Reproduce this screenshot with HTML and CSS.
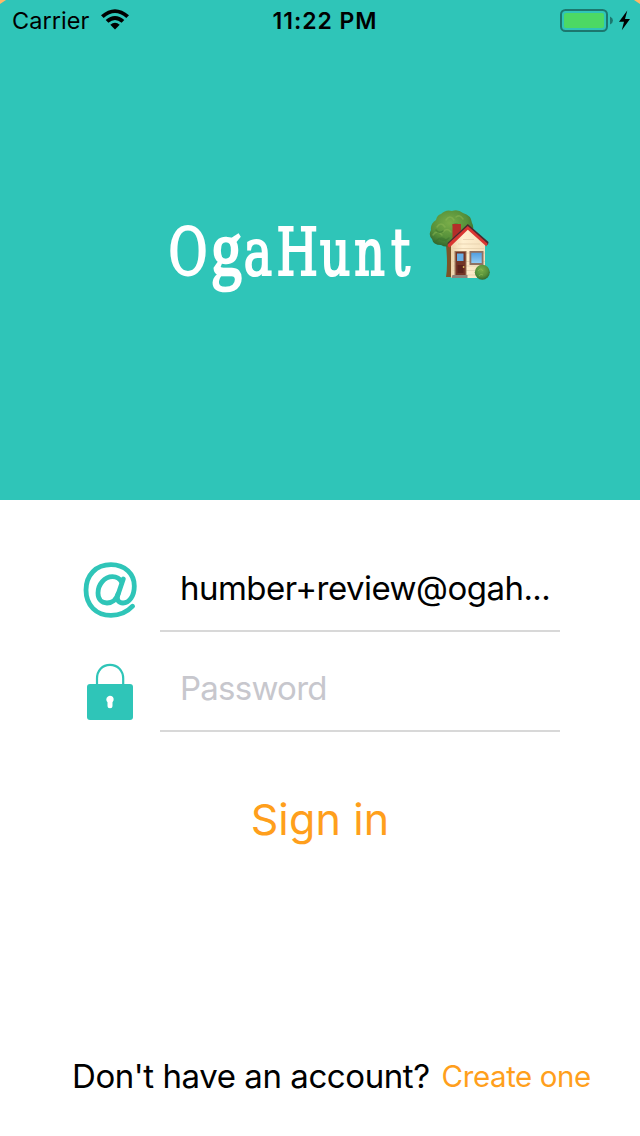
FILE: index.html
```html
<!DOCTYPE html>
<html lang="en">
<head>
<meta charset="utf-8">
<title>OgaHunt</title>
<link rel="stylesheet" href="styles.css">
</head>
<body>
<main class="screen">
  <header class="hero">
    <div class="status">
      <div class="status-left">
        <span class="carrier">Carrier</span>
        <svg class="wifi" width="30" height="22" viewBox="0 0 30 22">
          <path d="M1 6.3Q15-5.7 29 6.3L26.3 9Q15-.8 3.7 9Z"/>
          <path d="M5.7 11.1Q15 3 24.3 11.1L21.6 13.8Q15 8.2 8.4 13.8Z"/>
          <path d="M10.3 15.7Q15 11.8 19.7 15.7L15 20.4Z"/>
        </svg>
      </div>
      <span class="time">11:22 PM</span>
      <svg class="battery" width="74" height="26" viewBox="0 0 74 26">
        <rect x="1" y="3" width="46" height="21" rx="4.5" fill="none" stroke="#1c776e" stroke-width="2"/>
        <rect x="4" y="6" width="40" height="15" rx="2" fill="#4cd964"/>
        <path d="M50 9.5Q53 11 53 13.5T50 17.5Z" fill="#1c776e"/>
        <path d="M67.3 3.5L59 14.7H64L61.8 23.2L70 12H65Z"/>
      </svg>
    </div>
    <div class="brand">
      <svg class="wordmark" width="250" height="90" viewBox="0 0 250 90">
        <text class="wordmark-text" transform="scale(.8 1)" x="2 55 96 137 191 234 280" y="70">O<tspan class="wordmark-g">g</tspan>aHunt</text>
      </svg>
      <svg class="house" width="64" height="74" viewBox="0 0 64 74">
        <defs>
          <radialGradient id="leaf" cx=".45" cy=".35" r=".7"><stop offset="0" stop-color="#79ad49"/><stop offset=".6" stop-color="#55903a"/><stop offset="1" stop-color="#2c5f2b"/></radialGradient>
          <linearGradient id="wall" x1="0" x2="1"><stop offset="0" stop-color="#ecd3aa"/><stop offset=".35" stop-color="#fff0d0"/><stop offset="1" stop-color="#f5dfbb"/></linearGradient>
          <linearGradient id="glass" x1="0" y1="0" x2="0" y2="1"><stop offset="0" stop-color="#519fe0"/><stop offset="1" stop-color="#92cbf2"/></linearGradient>
        </defs>
        <path d="M17 36H25V68H17Q19 56 17 36Z" fill="#7c5528"/>
        <path d="M12 5Q17 0 23 2Q29 0 34 4Q42 6 43 14Q46 19 42 26L22 36Q17 39 12 36Q4 36 3 30Q-1 26 2 21Q1 15 7 11Q8 6 12 5Z" fill="url(#leaf)"/>
        <g fill="none" stroke-width="1.5" stroke-linecap="round" opacity=".45">
          <path d="M8 18q4-6 8 0M17 11q4-6 8 0M27 8q4-3 7 2M4 26q4-6 9 0M14 23q4-5 8 0" stroke="#91bc58"/>
          <path d="M7 32q6-6 10 0M11 30q5 3 9-1M24 16q5-3 7 3M7 21q3 4 7 1" stroke="#356d2d"/>
        </g>
        <path d="M22 35L39 19L56 35V69H22Z" fill="url(#wall)"/>
        <path d="M24 39.5H55M24 44H56M24 52.5H56M24 57H56M24 61.5H56M24 66H56M29 35H51M34 30.5H45" stroke="#e2cda9" stroke-width=".7"/>
        <path d="M23.5 15H32V25L23.5 32Z" fill="#b52d29"/>
        <path d="M18.5 34L38.8 15L59.5 33L59 36L38.8 19L19.5 37Z" fill="#492b30"/>
        <path d="M19 35L38.8 17L58.5 34.5L57.5 37.5L38.8 20.8L20.5 38.5L18.5 37Z" fill="#d93632"/>
        <path d="M25.5 42H37.5V67H25.5Z" fill="#9c7659"/>
        <path d="M26.8 43H36.5V66.5H26.8Z" fill="#733526"/>
        <path d="M28 44.5H34.5V52H28Z" fill="#68afe4"/>
        <path d="M28.5 56H34.5V64H28.5Z" fill="#5b241c"/>
        <circle cx="34.6" cy="58" r=".9" fill="#d9b85c"/>
        <path d="M23.5 66H38.5V69H22.5Z" fill="#8d8279"/>
        <rect x="40.5" y="42" width="14" height="14" fill="#8f7262"/>
        <rect x="42.3" y="43.8" width="10.4" height="10.2" fill="url(#glass)"/>
        <circle cx="53.3" cy="63.3" r="7.5" fill="url(#leaf)"/>
        <path d="M49 62q3-4 5 0M50 67q2-3 4-1" fill="none" stroke="#8aba53" opacity=".7"/>
      </svg>
    </div>
    <i class="corner corner-left"></i>
    <i class="corner corner-right"></i>
  </header>

  <section class="form">
    <div class="row">
      <svg class="icon" width="60" height="60" viewBox="0 0 60 60" fill="none" stroke="#2fc5b8" stroke-linecap="round" stroke-linejoin="round">
        <path d="M52.6 46.2Q44 55.4 31 55.4C16 55.4 6 45 6 30S16 4.7 31 4.7C45 4.7 54.3 14 54.3 26C54.3 36.5 49 43 43 43C38.5 43 36.5 40 37.7 35.5L43.3 19" stroke-width="4.8"/>
        <path d="M41.5 22C39.5 18.2 36.5 16.7 32.5 16.7C24.5 16.7 18 24.5 18 33C18 39 21.5 43 27 43C32 43 36.5 39.5 38 34" stroke-width="4.8"/>
      </svg>
      <div class="field email">humber+review@ogah...</div>
    </div>
    <div class="row">
      <svg class="icon" width="60" height="60" viewBox="0 0 60 60">
        <path d="M17 26V18.5C17 10.5 22.3 4.8 30 4.8S43.2 10.5 43.2 18.5V26" fill="none" stroke="#2fc5b8" stroke-width="2.2"/>
        <rect x="7" y="24" width="46" height="36" rx="3" fill="#2fc5b8"/>
        <path d="M26.3 39.5A3.7 3.7 0 1 1 32.5 42.2V45.8A2.5 2.5 0 0 1 27.5 45.8V42.2A3.7 3.7 0 0 1 26.3 39.5Z" fill="#fff"/>
      </svg>
      <div class="field password">Password</div>
    </div>
  </section>
  <div class="signin"><span>Sign in</span></div>
  <footer class="signup">
    <span class="question">Don't have an account?</span>
    <span class="create">Create one</span>
  </footer>
</main>
</body>
</html>
```
FILE: styles.css
```css
body { margin: 0; background: #fff; }
.screen {
  width: 640px; height: 1136px; overflow: hidden;
  display: flex; flex-direction: column;
  font-family: Inter, sans-serif; color: #000; white-space: nowrap;
}
.hero {
  position: relative; box-sizing: border-box;
  height: 500px; background: #2fc5b8;
  display: flex; flex-direction: column;
}
.status {
  display: grid; grid-template-columns: 1fr auto 1fr; align-items: center;
  height: 40px; padding: 0 6px 0 12px;
}
.status-left { display: flex; align-items: center; gap: 11px; }
.carrier { font-size: 23.5px; letter-spacing: .05px; }
.time { font-size: 23px; font-weight: 600; letter-spacing: .95px; margin-left: 4px; padding-top: 1px; }
.battery { justify-self: end; }
.brand { display: flex; align-items: flex-start; gap: 12px; padding: 165px 0 0 167px; }
.wordmark { overflow: visible; }
.wordmark-text {
  font-family: "DejaVu Serif Condensed", "DejaVu Serif", serif; font-size: 66px;
  fill: #fff; stroke: #fff; stroke-width: 2.1px;
}
.wordmark-g { font-family: "Liberation Serif", serif; font-size: 77px; stroke-width: 2.6px; }
.house { margin-top: 4px; }
.corner { position: absolute; top: 0; width: 6px; height: 4px; background: #ffb868; }
.corner-left { left: 0; clip-path: polygon(0 0, 100% 0, 0 100%); }
.corner-right { right: 0; clip-path: polygon(0 0, 100% 0, 100% 100%); }
.form { padding: 32px 80px 0; }
.row { display: flex; align-items: flex-end; gap: 20px; height: 100px; }
.icon { margin-bottom: 12px; }
.field {
  box-sizing: border-box; width: 400px; height: 90px;
  border-bottom: 2px solid #d8d8d8; padding: 3px 0 0 20px;
  font-size: 33px; line-height: 86px;
}
.email { letter-spacing: -.53px; }
.password { color: #c7c7cd; letter-spacing: -.75px; }
.signin { margin-top: 57px; height: 60px; text-align: center; font-size: 43px; letter-spacing: .15px; line-height: 60px; color: #ff9f1c; }
.signup { margin-top: auto; height: 60px; margin-bottom: 30px; padding-left: 72px; display: flex; align-items: center; gap: 12px; }
.question { font-size: 33px; letter-spacing: -.43px; }
.create { font-size: 29.5px; letter-spacing: -.42px; color: #ff9f1c; }
```
